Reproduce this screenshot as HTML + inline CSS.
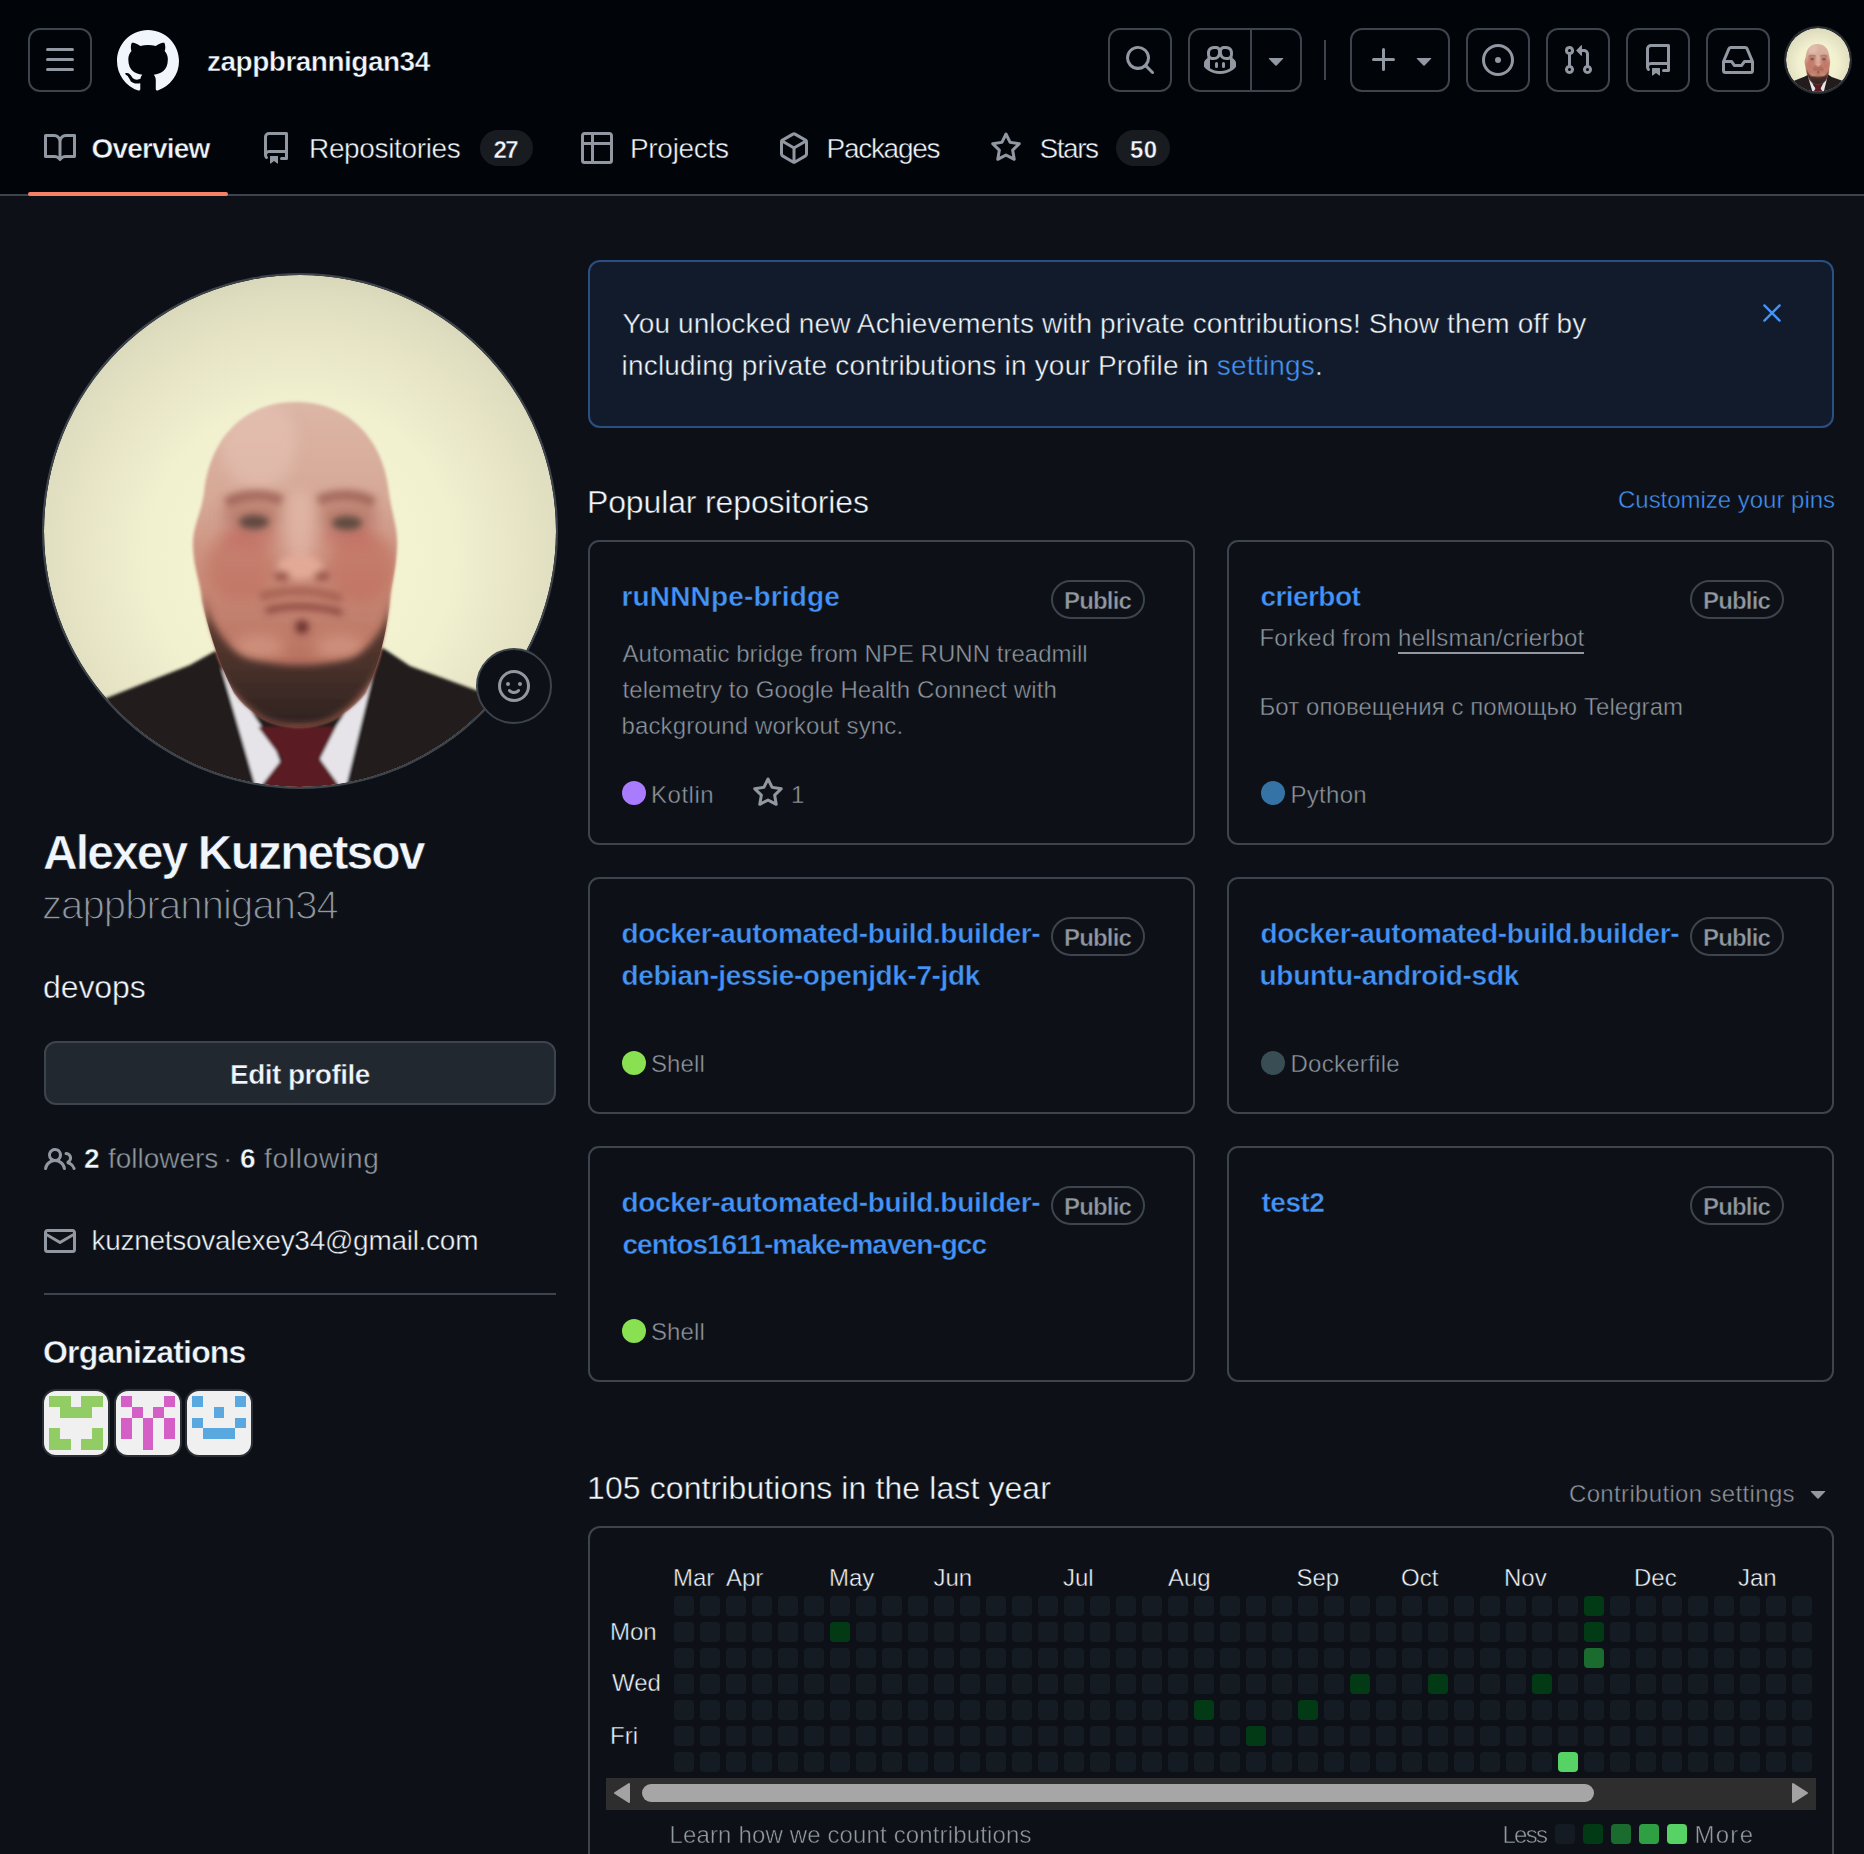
<!DOCTYPE html><html><head><meta charset="utf-8"><style>
html,body{margin:0;padding:0;background:#0d1117;width:1864px;height:1854px;overflow:hidden;}
body{position:relative;font-family:"Liberation Sans",sans-serif;}
.btn{position:absolute;box-sizing:border-box;border:2px solid #3d444d;border-radius:12px;}
</style></head><body>
<div style="position:absolute;left:0px;top:0px;width:1864px;height:194px;background:#010409"></div>
<div style="position:absolute;left:0px;top:194px;width:1864px;height:2px;background:#3d444d"></div>
<div class="btn" style="left:28px;top:28px;width:64px;height:64px"></div>
<svg style="position:absolute;left:44px;top:44px;" width="32" height="32" viewBox="0 0 16 16" fill="#9198a1"><path d="M1 2.75A.75.75 0 0 1 1.75 2h12.5a.75.75 0 0 1 0 1.5H1.75A.75.75 0 0 1 1 2.75Zm0 5A.75.75 0 0 1 1.75 7h12.5a.75.75 0 0 1 0 1.5H1.75A.75.75 0 0 1 1 7.75ZM1.75 12h12.5a.75.75 0 0 1 0 1.5H1.75a.75.75 0 0 1 0-1.5Z"/></svg>
<svg style="position:absolute;left:117px;top:30px;" width="62" height="62" viewBox="0 0 16 16" fill="#f0f6fc"><path d="M8 0c4.42 0 8 3.58 8 8a8.013 8.013 0 0 1-5.45 7.59c-.4.08-.55-.17-.55-.38 0-.27.01-1.13.01-2.2 0-.75-.25-1.23-.54-1.48 1.78-.2 3.65-.88 3.65-3.95 0-.88-.31-1.59-.82-2.15.08-.2.36-1.02-.08-2.12 0 0-.67-.22-2.2.82-.64-.18-1.32-.27-2-.27-.68 0-1.36.09-2 .27-1.53-1.03-2.2-.82-2.2-.82-.44 1.1-.16 1.92-.08 2.12-.51.56-.82 1.28-.82 2.15 0 3.06 1.86 3.75 3.64 3.95-.23.2-.44.55-.51 1.07-.46.21-1.61.55-2.33-.66-.15-.24-.6-.83-1.23-.82-.67.01-.27.38.01.53.34.19.73.9.82 1.13.16.45.68 1.31 2.69.94 0 .67.01 1.3.01 1.49 0 .21-.15.45-.55.38A7.995 7.995 0 0 1 0 8c0-4.42 3.58-8 8-8Z"/></svg>
<div id="t1c101240" style="position:absolute;left:207.00px;top:47.80px;font-size:28px;line-height:28px;color:#f0f6fc;font-weight:700;letter-spacing:-0.500px;white-space:nowrap;-webkit-text-stroke:0.45px #010409;">zappbrannigan34</div>
<div class="btn" style="left:1108px;top:28px;width:64px;height:64px"></div>
<svg style="position:absolute;left:1124px;top:44px;" width="32" height="32" viewBox="0 0 16 16" fill="#9198a1"><path d="M10.68 11.74a6 6 0 0 1-7.922-8.982 6 6 0 0 1 8.982 7.922l3.04 3.04a.749.749 0 0 1-.326 1.275.749.749 0 0 1-.734-.215ZM11.5 7a4.499 4.499 0 1 0-8.997 0A4.499 4.499 0 0 0 11.5 7Z"/></svg>
<div class="btn" style="left:1188px;top:28px;width:114px;height:64px"></div>
<div style="position:absolute;left:1250px;top:28px;width:2px;height:64px;background:#3d444d"></div>
<svg style="position:absolute;left:1204px;top:44px;" width="32" height="32" viewBox="0 0 16 16" fill="#9198a1"><path d="M7.998 15.035c-4.562 0-7.873-2.914-7.998-3.749V9.338c.085-.628.677-1.686 1.588-2.065.013-.07.024-.143.036-.218.029-.183.06-.384.126-.612-.201-.508-.254-1.084-.254-1.656 0-.87.128-1.769.693-2.484.579-.733 1.494-1.124 2.724-1.261 1.206-.134 2.262.034 2.944.765.05.053.096.108.139.165.044-.057.094-.112.143-.165.682-.731 1.738-.899 2.944-.765 1.23.137 2.145.528 2.724 1.261.566.715.693 1.614.693 2.484 0 .572-.053 1.148-.254 1.656.066.228.098.429.126.612.012.076.024.148.037.218.924.385 1.522 1.471 1.591 2.095v1.872c0 .766-3.351 3.795-8.002 3.795Zm0-1.485c2.28 0 4.584-1.11 5.002-1.433V7.862l-.023-.116c-.49.21-1.075.291-1.727.291-1.146 0-2.059-.327-2.71-.991A3.222 3.222 0 0 1 8 6.303a3.24 3.24 0 0 1-.544.743c-.65.664-1.563.991-2.71.991-.652 0-1.236-.081-1.727-.291l-.023.116v4.255c.419.323 2.722 1.433 5.002 1.433ZM6.762 2.83c-.193-.206-.637-.413-1.682-.297-1.019.113-1.479.404-1.713.7-.247.312-.369.789-.369 1.554 0 .793.129 1.171.308 1.371.162.181.519.379 1.442.379.853 0 1.339-.235 1.638-.54.315-.322.527-.827.617-1.553.117-.935-.037-1.395-.241-1.614Zm4.155-.297c-1.044-.116-1.488.091-1.681.297-.204.219-.359.679-.242 1.614.091.726.303 1.231.618 1.553.299.305.784.54 1.638.54.922 0 1.28-.198 1.442-.379.179-.2.308-.578.308-1.371 0-.765-.123-1.242-.37-1.554-.233-.296-.693-.587-1.713-.7Z"/><path d="M6.25 9.037a.75.75 0 0 1 .75.75v1.501a.75.75 0 0 1-1.5 0V9.787a.75.75 0 0 1 .75-.75Zm4.25.75v1.501a.75.75 0 0 1-1.5 0V9.787a.75.75 0 0 1 1.5 0Z"/></svg>
<svg style="position:absolute;left:1260px;top:44px;" width="32" height="32" viewBox="0 0 16 16" fill="#9198a1"><path d="m4.427 7.427 3.396 3.396a.25.25 0 0 0 .354 0l3.396-3.396A.25.25 0 0 0 11.396 7H4.604a.25.25 0 0 0-.177.427Z"/></svg>
<div style="position:absolute;left:1324px;top:40px;width:2px;height:40px;background:#3d444d"></div>
<div class="btn" style="left:1350px;top:28px;width:100px;height:64px"></div>
<svg style="position:absolute;left:1368px;top:44px;" width="32" height="32" viewBox="0 0 16 16" fill="#9198a1"><path d="M7.75 2a.75.75 0 0 1 .75.75V7h4.25a.75.75 0 0 1 0 1.5H8.5v4.25a.75.75 0 0 1-1.5 0V8.5H2.75a.75.75 0 0 1 0-1.5H7V2.75A.75.75 0 0 1 7.75 2Z"/></svg>
<svg style="position:absolute;left:1408px;top:44px;" width="32" height="32" viewBox="0 0 16 16" fill="#9198a1"><path d="m4.427 7.427 3.396 3.396a.25.25 0 0 0 .354 0l3.396-3.396A.25.25 0 0 0 11.396 7H4.604a.25.25 0 0 0-.177.427Z"/></svg>
<div class="btn" style="left:1466px;top:28px;width:64px;height:64px"></div>
<svg style="position:absolute;left:1482px;top:44px;" width="32" height="32" viewBox="0 0 16 16" fill="#9198a1"><path d="M8 9.5a1.5 1.5 0 1 0 0-3 1.5 1.5 0 0 0 0 3Z"/><path d="M8 0a8 8 0 1 1 0 16A8 8 0 0 1 8 0ZM1.5 8a6.5 6.5 0 1 0 13 0 6.5 6.5 0 0 0-13 0Z"/></svg>
<div class="btn" style="left:1546px;top:28px;width:64px;height:64px"></div>
<svg style="position:absolute;left:1562px;top:44px;" width="32" height="32" viewBox="0 0 16 16" fill="#9198a1"><path d="M1.5 3.25a2.25 2.25 0 1 1 3 2.122v5.256a2.251 2.251 0 1 1-1.5 0V5.372A2.25 2.25 0 0 1 1.5 3.25Zm5.677-.177L9.573.677A.25.25 0 0 1 10 .854V2.5h1A2.5 2.5 0 0 1 13.5 5v5.628a2.251 2.251 0 1 1-1.5 0V5a1 1 0 0 0-1-1h-1v1.646a.25.25 0 0 1-.427.177L7.177 3.427a.25.25 0 0 1 0-.354ZM3.75 2.5a.75.75 0 1 0 0 1.5.75.75 0 0 0 0-1.5Zm0 9.5a.75.75 0 1 0 0 1.5.75.75 0 0 0 0-1.5Zm8.25.75a.75.75 0 1 0 1.5 0 .75.75 0 0 0-1.5 0Z"/></svg>
<div class="btn" style="left:1626px;top:28px;width:64px;height:64px"></div>
<svg style="position:absolute;left:1642px;top:44px;" width="32" height="32" viewBox="0 0 16 16" fill="#9198a1"><path d="M2 2.5A2.5 2.5 0 0 1 4.5 0h8.75a.75.75 0 0 1 .75.75v12.5a.75.75 0 0 1-.75.75h-2.5a.75.75 0 0 1 0-1.5h1.75v-2h-8a1 1 0 0 0-.714 1.7.75.75 0 1 1-1.072 1.05A2.495 2.495 0 0 1 2 11.5Zm10.5-1h-8a1 1 0 0 0-1 1v6.708A2.486 2.486 0 0 1 4.5 9h8ZM5 12.25a.25.25 0 0 1 .25-.25h3.5a.25.25 0 0 1 .25.25v3.25a.25.25 0 0 1-.4.2l-1.45-1.087a.249.249 0 0 0-.3 0L5.4 15.7a.25.25 0 0 1-.4-.2Z"/></svg>
<div class="btn" style="left:1706px;top:28px;width:64px;height:64px"></div>
<svg style="position:absolute;left:1722px;top:44px;" width="32" height="32" viewBox="0 0 16 16" fill="#9198a1"><path d="M2.8 2.06A1.75 1.75 0 0 1 4.41 1h7.18c.7 0 1.333.417 1.61 1.06l2.74 6.395c.04.093.06.194.06.295v4.5A1.75 1.75 0 0 1 14.25 15H1.75A1.75 1.75 0 0 1 0 13.25v-4.5c0-.101.02-.202.06-.295Zm1.61.44a.25.25 0 0 0-.23.152L1.887 8H4.75a.75.75 0 0 1 .6.3L6.625 10h2.75l1.275-1.7a.75.75 0 0 1 .6-.3h2.863L11.82 2.652a.25.25 0 0 0-.23-.152Zm10.09 7h-2.875l-1.275 1.7a.75.75 0 0 1-.6.3h-3.5a.75.75 0 0 1-.6-.3L4.375 9.5H1.5v3.75c0 .138.112.25.25.25h12.5a.25.25 0 0 0 .25-.25Z"/></svg>
<div style="position:absolute;left:1786px;top:28px;width:64px;height:64px;border-radius:50%;overflow:hidden;box-shadow:0 0 0 2px #2a2f36"><svg width="100%" height="100%" viewBox="0 0 512 512" style="display:block">
<defs>
<radialGradient id="habg" cx="0.5" cy="0.55" r="0.6">
<stop offset="0" stop-color="#f7f7d6"/><stop offset="0.5" stop-color="#f1f0cf"/><stop offset="0.85" stop-color="#e0dec0"/><stop offset="1" stop-color="#d2d0b2"/></radialGradient>
<linearGradient id="haskin" x1="0" y1="0" x2="0" y2="1">
<stop offset="0" stop-color="#dcb6a6"/><stop offset="0.3" stop-color="#d6a896"/><stop offset="0.55" stop-color="#c98a78"/><stop offset="0.8" stop-color="#b87260"/><stop offset="1" stop-color="#9c5a48"/></linearGradient>
<linearGradient id="habeard" x1="0" y1="0" x2="0" y2="1">
<stop offset="0" stop-color="#8a5a48" stop-opacity="0.2"/><stop offset="0.25" stop-color="#5a3a30"/><stop offset="1" stop-color="#2e2220"/></linearGradient>
<filter id="hab1" x="-10%" y="-10%" width="120%" height="120%"><feGaussianBlur stdDeviation="1.6"/></filter>
<filter id="hab2" x="-50%" y="-50%" width="200%" height="200%"><feGaussianBlur stdDeviation="7"/></filter>
<filter id="hab3" x="-50%" y="-50%" width="200%" height="200%"><feGaussianBlur stdDeviation="3.5"/></filter>
<clipPath id="haclip"><circle cx="256" cy="256" r="256"/></clipPath>
<clipPath id="hahc"><path d="M252 127 C305 127 340 165 345 218 C348 240 354 252 353 272 C352 295 348 305 346 326 C343 352 338 382 322 418 C305 440 280 452 255 452 C230 452 205 440 190 418 C172 382 164 352 158 326 C156 305 150 295 149 272 C148 252 157 240 160 218 C165 165 200 127 252 127 Z"/></clipPath>
</defs>
<g clip-path="url(#haclip)">
<rect width="512" height="512" fill="url(#habg)"/>
<g filter="url(#hab1)">
<path d="M-20 450 L60 424 L146 390 L173 375 L256 400 L339 373 L366 391 L445 420 L540 452 L540 540 L-20 540Z" fill="#211d1e"/>
<path d="M177 392 L230 470 L248 520 L214 520 Z" fill="#e6e4e8"/>
<path d="M331 392 L280 470 L266 520 L300 520 Z" fill="#e6e4e8"/>
<path d="M214 452 L292 452 L276 484 L302 520 L210 520 L238 484 Z" fill="#5a1c22"/>
<path d="M252 127 C305 127 340 165 345 218 C348 240 354 252 353 272 C352 295 348 305 346 326 C343 352 338 382 322 418 C305 440 280 452 255 452 C230 452 205 440 190 418 C172 382 164 352 158 326 C156 305 150 295 149 272 C148 252 157 240 160 218 C165 165 200 127 252 127 Z" fill="url(#haskin)"/>
</g>
<g clip-path="url(#hahc)">
<g filter="url(#hab2)">
<ellipse cx="215" cy="170" rx="38" ry="45" fill="#e8c8ba" opacity="0.45"/>
<ellipse cx="196" cy="292" rx="34" ry="34" fill="#bf6c5c" opacity="0.55"/>
<ellipse cx="318" cy="292" rx="34" ry="36" fill="#bf6c5c" opacity="0.6"/>
<ellipse cx="205" cy="262" rx="30" ry="10" fill="#c06a60" opacity="0.6"/><ellipse cx="208" cy="240" rx="30" ry="16" fill="#a86458" opacity="0.55"/><ellipse cx="304" cy="241" rx="30" ry="16" fill="#a86458" opacity="0.55"/>
<ellipse cx="305" cy="262" rx="30" ry="10" fill="#c06a60" opacity="0.6"/>
<ellipse cx="256" cy="255" rx="14" ry="40" fill="#e8c0b0" opacity="0.6"/>
<ellipse cx="215" cy="372" rx="26" ry="12" fill="#d69a86" opacity="0.7"/>
<ellipse cx="296" cy="372" rx="26" ry="12" fill="#d69a86" opacity="0.7"/>
</g>
<g filter="url(#hab3)">
<path d="M182 228 C200 218 222 218 238 226" stroke="#94564a" stroke-width="11" fill="none" opacity="0.7"/>
<path d="M274 226 C292 218 314 218 330 228" stroke="#94564a" stroke-width="11" fill="none" opacity="0.7"/>
<ellipse cx="210" cy="247" rx="15" ry="7" fill="#5e4640"/>
<ellipse cx="303" cy="248" rx="15" ry="7" fill="#5e4a40"/>
<ellipse cx="256" cy="292" rx="22" ry="12" fill="#e2aa96"/>
<ellipse cx="238" cy="301" rx="8" ry="5" fill="#9a5448"/>
<ellipse cx="278" cy="301" rx="8" ry="5" fill="#9a5448"/>
<path d="M216 322 C240 314 272 314 298 324" stroke="#a05a4a" stroke-width="9" fill="none" opacity="0.8"/>
<path d="M222 336 C245 330 272 330 298 338" stroke="#7e3a34" stroke-width="5" fill="none"/>
<ellipse cx="258" cy="352" rx="7" ry="7" fill="#6e3430"/>
<path d="M160 318 C161.5 315.0 166.0 341.7 172 352 C178.0 362.3 186.7 374.0 196 380 C205.3 386.0 218.0 386.3 228 388 C238.0 389.7 246.7 390.0 256 390 C265.3 390.0 274.3 389.7 284 388 C293.7 386.3 305.0 386.0 314 380 C323.0 374.0 332.3 362.3 338 352 C343.7 341.7 346.8 315.0 348 318 C349.2 321.0 348.0 356.0 345 370 C342.0 384.0 336.3 392.0 330 402 C323.7 412.0 315.0 422.7 307 430 C299.0 437.3 290.8 442.7 282 446 C273.2 449.3 263.3 450.0 254 450 C244.7 450.0 234.7 449.3 226 446 C217.3 442.7 210.0 437.3 202 430 C194.0 422.7 184.5 412.0 178 402 C171.5 392.0 166.0 384.0 163 370 C160.0 356.0 158.5 321.0 160 318Z" fill="url(#habeard)"/>
</g>
</g>
</g>
</svg></div>
<svg style="position:absolute;left:44px;top:132px;" width="32" height="32" viewBox="0 0 16 16" fill="#9198a1"><path d="M0 1.75A.75.75 0 0 1 .75 1h4.253c1.227 0 2.317.59 3 1.501A3.743 3.743 0 0 1 11.006 1h4.245a.75.75 0 0 1 .75.75v10.5a.75.75 0 0 1-.75.75h-4.507a2.25 2.25 0 0 0-1.591.659l-.622.621a.75.75 0 0 1-1.06 0l-.622-.621A2.25 2.25 0 0 0 5.258 13H.75a.75.75 0 0 1-.75-.75Zm7.251 10.324.004-5.073-.002-2.253A2.25 2.25 0 0 0 5.003 2.5H1.5v9h3.757a3.75 3.75 0 0 1 1.994.574ZM8.755 4.75l-.004 7.322a3.752 3.752 0 0 1 1.992-.572H14.5v-9h-3.495a2.25 2.25 0 0 0-2.25 2.25Z"/></svg>
<div id="t9cfff925" style="position:absolute;left:91.50px;top:135.30px;font-size:28px;line-height:28px;color:#f0f6fc;font-weight:700;letter-spacing:-0.829px;white-space:nowrap;-webkit-text-stroke:0.45px #010409;">Overview</div>
<div style="position:absolute;left:28px;top:192px;width:200px;height:4px;background:#f78166;border-radius:2px"></div>
<svg style="position:absolute;left:260px;top:132px;" width="32" height="32" viewBox="0 0 16 16" fill="#9198a1"><path d="M2 2.5A2.5 2.5 0 0 1 4.5 0h8.75a.75.75 0 0 1 .75.75v12.5a.75.75 0 0 1-.75.75h-2.5a.75.75 0 0 1 0-1.5h1.75v-2h-8a1 1 0 0 0-.714 1.7.75.75 0 1 1-1.072 1.05A2.495 2.495 0 0 1 2 11.5Zm10.5-1h-8a1 1 0 0 0-1 1v6.708A2.486 2.486 0 0 1 4.5 9h8ZM5 12.25a.25.25 0 0 1 .25-.25h3.5a.25.25 0 0 1 .25.25v3.25a.25.25 0 0 1-.4.2l-1.45-1.087a.249.249 0 0 0-.3 0L5.4 15.7a.25.25 0 0 1-.4-.2Z"/></svg>
<div id="t4dd1f61e" style="position:absolute;left:309.00px;top:135.30px;font-size:28px;line-height:28px;color:#f0f6fc;font-weight:400;letter-spacing:-0.345px;white-space:nowrap;-webkit-text-stroke:0.45px #010409;">Repositories</div>
<div style="position:absolute;left:480px;top:130px;width:53px;height:36px;background:#181b20;border-radius:18px"></div>
<div id="t87ed042e" style="position:absolute;left:493.50px;top:138.18px;font-size:24px;line-height:24px;color:#f0f6fc;font-weight:700;letter-spacing:-1.600px;white-space:nowrap;-webkit-text-stroke:0.45px #181b20;">27</div>
<svg style="position:absolute;left:581px;top:132px;" width="32" height="32" viewBox="0 0 16 16" fill="#9198a1"><path d="M0 1.75C0 .784.784 0 1.75 0h12.5C15.216 0 16 .784 16 1.75v12.5A1.75 1.75 0 0 1 14.25 16H1.75A1.75 1.75 0 0 1 0 14.25ZM6.5 6.5v8h7.75a.25.25 0 0 0 .25-.25V6.5Zm8-1.5V1.75a.25.25 0 0 0-.25-.25H6.5V5Zm-13 1.5v7.75c0 .138.112.25.25.25H5v-8ZM5 5V1.5H1.75a.25.25 0 0 0-.25.25V5Z"/></svg>
<div id="td437a748" style="position:absolute;left:630.00px;top:135.30px;font-size:28px;line-height:28px;color:#f0f6fc;font-weight:400;letter-spacing:-0.314px;white-space:nowrap;-webkit-text-stroke:0.45px #010409;">Projects</div>
<svg style="position:absolute;left:778px;top:132px;" width="32" height="32" viewBox="0 0 16 16" fill="#9198a1"><path d="m8.878.392 5.25 3.045c.54.314.872.89.872 1.514v6.098a1.75 1.75 0 0 1-.872 1.514l-5.25 3.045a1.75 1.75 0 0 1-1.756 0l-5.25-3.045A1.75 1.75 0 0 1 1 11.049V4.951c0-.624.332-1.2.872-1.514L7.122.392a1.75 1.75 0 0 1 1.756 0ZM7.875 1.69l-4.63 2.685L8 7.133l4.755-2.758-4.63-2.685a.248.248 0 0 0-.25 0ZM2.5 5.677v5.372c0 .09.047.171.125.216l4.625 2.683V8.432Zm6.25 8.271 4.625-2.683a.25.25 0 0 0 .125-.216V5.677L8.75 8.432Z"/></svg>
<div id="t48c3dd9c" style="position:absolute;left:826.50px;top:135.30px;font-size:28px;line-height:28px;color:#f0f6fc;font-weight:400;letter-spacing:-1.286px;white-space:nowrap;-webkit-text-stroke:0.45px #010409;">Packages</div>
<svg style="position:absolute;left:990px;top:132px;" width="32" height="32" viewBox="0 0 16 16" fill="#9198a1"><path d="M8 .25a.75.75 0 0 1 .673.418l1.882 3.815 4.21.612a.75.75 0 0 1 .416 1.279l-3.046 2.97.719 4.192a.751.751 0 0 1-1.088.791L8 12.347l-3.766 1.98a.75.75 0 0 1-1.088-.79l.72-4.194L.818 6.374a.75.75 0 0 1 .416-1.28l4.21-.611L7.327.668A.75.75 0 0 1 8 .25Zm0 2.445L6.615 5.5a.75.75 0 0 1-.564.41l-3.097.45 2.24 2.184a.75.75 0 0 1 .216.664l-.528 3.084 2.769-1.456a.75.75 0 0 1 .698 0l2.77 1.456-.53-3.084a.75.75 0 0 1 .216-.664l2.24-2.183-3.096-.45a.75.75 0 0 1-.564-.41L8 2.694Z"/></svg>
<div id="t297d9532" style="position:absolute;left:1039.50px;top:135.30px;font-size:28px;line-height:28px;color:#f0f6fc;font-weight:400;letter-spacing:-1.450px;white-space:nowrap;-webkit-text-stroke:0.45px #010409;">Stars</div>
<div style="position:absolute;left:1116px;top:130px;width:54px;height:36px;background:#181b20;border-radius:18px"></div>
<div id="td88de1e3" style="position:absolute;left:1130.00px;top:138.18px;font-size:24px;line-height:24px;color:#f0f6fc;font-weight:700;letter-spacing:0.400px;white-space:nowrap;-webkit-text-stroke:0.45px #181b20;">50</div>
<div style="position:absolute;left:44px;top:275px;width:512px;height:512px;border-radius:50%;overflow:hidden;box-shadow:0 0 0 2px #3d444d"><svg width="100%" height="100%" viewBox="0 0 512 512" style="display:block">
<defs>
<radialGradient id="babg" cx="0.5" cy="0.55" r="0.6">
<stop offset="0" stop-color="#f7f7d6"/><stop offset="0.5" stop-color="#f1f0cf"/><stop offset="0.85" stop-color="#e0dec0"/><stop offset="1" stop-color="#d2d0b2"/></radialGradient>
<linearGradient id="baskin" x1="0" y1="0" x2="0" y2="1">
<stop offset="0" stop-color="#dcb6a6"/><stop offset="0.3" stop-color="#d6a896"/><stop offset="0.55" stop-color="#c98a78"/><stop offset="0.8" stop-color="#b87260"/><stop offset="1" stop-color="#9c5a48"/></linearGradient>
<linearGradient id="babeard" x1="0" y1="0" x2="0" y2="1">
<stop offset="0" stop-color="#8a5a48" stop-opacity="0.2"/><stop offset="0.25" stop-color="#5a3a30"/><stop offset="1" stop-color="#2e2220"/></linearGradient>
<filter id="bab1" x="-10%" y="-10%" width="120%" height="120%"><feGaussianBlur stdDeviation="1.6"/></filter>
<filter id="bab2" x="-50%" y="-50%" width="200%" height="200%"><feGaussianBlur stdDeviation="7"/></filter>
<filter id="bab3" x="-50%" y="-50%" width="200%" height="200%"><feGaussianBlur stdDeviation="3.5"/></filter>
<clipPath id="baclip"><circle cx="256" cy="256" r="256"/></clipPath>
<clipPath id="bahc"><path d="M252 127 C305 127 340 165 345 218 C348 240 354 252 353 272 C352 295 348 305 346 326 C343 352 338 382 322 418 C305 440 280 452 255 452 C230 452 205 440 190 418 C172 382 164 352 158 326 C156 305 150 295 149 272 C148 252 157 240 160 218 C165 165 200 127 252 127 Z"/></clipPath>
</defs>
<g clip-path="url(#baclip)">
<rect width="512" height="512" fill="url(#babg)"/>
<g filter="url(#bab1)">
<path d="M-20 450 L60 424 L146 390 L173 375 L256 400 L339 373 L366 391 L445 420 L540 452 L540 540 L-20 540Z" fill="#211d1e"/>
<path d="M177 392 L230 470 L248 520 L214 520 Z" fill="#e6e4e8"/>
<path d="M331 392 L280 470 L266 520 L300 520 Z" fill="#e6e4e8"/>
<path d="M214 452 L292 452 L276 484 L302 520 L210 520 L238 484 Z" fill="#5a1c22"/>
<path d="M252 127 C305 127 340 165 345 218 C348 240 354 252 353 272 C352 295 348 305 346 326 C343 352 338 382 322 418 C305 440 280 452 255 452 C230 452 205 440 190 418 C172 382 164 352 158 326 C156 305 150 295 149 272 C148 252 157 240 160 218 C165 165 200 127 252 127 Z" fill="url(#baskin)"/>
</g>
<g clip-path="url(#bahc)">
<g filter="url(#bab2)">
<ellipse cx="215" cy="170" rx="38" ry="45" fill="#e8c8ba" opacity="0.45"/>
<ellipse cx="196" cy="292" rx="34" ry="34" fill="#bf6c5c" opacity="0.55"/>
<ellipse cx="318" cy="292" rx="34" ry="36" fill="#bf6c5c" opacity="0.6"/>
<ellipse cx="205" cy="262" rx="30" ry="10" fill="#c06a60" opacity="0.6"/><ellipse cx="208" cy="240" rx="30" ry="16" fill="#a86458" opacity="0.55"/><ellipse cx="304" cy="241" rx="30" ry="16" fill="#a86458" opacity="0.55"/>
<ellipse cx="305" cy="262" rx="30" ry="10" fill="#c06a60" opacity="0.6"/>
<ellipse cx="256" cy="255" rx="14" ry="40" fill="#e8c0b0" opacity="0.6"/>
<ellipse cx="215" cy="372" rx="26" ry="12" fill="#d69a86" opacity="0.7"/>
<ellipse cx="296" cy="372" rx="26" ry="12" fill="#d69a86" opacity="0.7"/>
</g>
<g filter="url(#bab3)">
<path d="M182 228 C200 218 222 218 238 226" stroke="#94564a" stroke-width="11" fill="none" opacity="0.7"/>
<path d="M274 226 C292 218 314 218 330 228" stroke="#94564a" stroke-width="11" fill="none" opacity="0.7"/>
<ellipse cx="210" cy="247" rx="15" ry="7" fill="#5e4640"/>
<ellipse cx="303" cy="248" rx="15" ry="7" fill="#5e4a40"/>
<ellipse cx="256" cy="292" rx="22" ry="12" fill="#e2aa96"/>
<ellipse cx="238" cy="301" rx="8" ry="5" fill="#9a5448"/>
<ellipse cx="278" cy="301" rx="8" ry="5" fill="#9a5448"/>
<path d="M216 322 C240 314 272 314 298 324" stroke="#a05a4a" stroke-width="9" fill="none" opacity="0.8"/>
<path d="M222 336 C245 330 272 330 298 338" stroke="#7e3a34" stroke-width="5" fill="none"/>
<ellipse cx="258" cy="352" rx="7" ry="7" fill="#6e3430"/>
<path d="M160 318 C161.5 315.0 166.0 341.7 172 352 C178.0 362.3 186.7 374.0 196 380 C205.3 386.0 218.0 386.3 228 388 C238.0 389.7 246.7 390.0 256 390 C265.3 390.0 274.3 389.7 284 388 C293.7 386.3 305.0 386.0 314 380 C323.0 374.0 332.3 362.3 338 352 C343.7 341.7 346.8 315.0 348 318 C349.2 321.0 348.0 356.0 345 370 C342.0 384.0 336.3 392.0 330 402 C323.7 412.0 315.0 422.7 307 430 C299.0 437.3 290.8 442.7 282 446 C273.2 449.3 263.3 450.0 254 450 C244.7 450.0 234.7 449.3 226 446 C217.3 442.7 210.0 437.3 202 430 C194.0 422.7 184.5 412.0 178 402 C171.5 392.0 166.0 384.0 163 370 C160.0 356.0 158.5 321.0 160 318Z" fill="url(#babeard)"/>
</g>
</g>
</g>
</svg></div>
<div style="position:absolute;left:476px;top:648px;width:76px;height:76px;box-sizing:border-box;border-radius:50%;background:#0d1117;border:2px solid #3d444d"></div>
<svg style="position:absolute;left:498px;top:670px;" width="32" height="32" viewBox="0 0 16 16" fill="#9198a1"><path d="M8 0a8 8 0 1 1 0 16A8 8 0 0 1 8 0ZM1.5 8a6.5 6.5 0 1 0 13 0 6.5 6.5 0 0 0-13 0Zm3.82 1.636a.75.75 0 0 1 1.038.175l.007.009c.103.118.22.222.35.31.264.178.683.37 1.285.37.602 0 1.02-.192 1.285-.371.13-.088.247-.192.35-.31l.007-.008a.75.75 0 0 1 1.222.87l-.022-.015c.02.013.021.015.021.015v.001l-.001.002-.002.003-.005.007-.014.019a2.066 2.066 0 0 1-.184.213c-.16.166-.338.316-.53.445-.63.418-1.37.638-2.127.629-.946 0-1.652-.308-2.126-.63a3.331 3.331 0 0 1-.715-.657l-.014-.02-.005-.006-.002-.003v-.002h-.001l.613-.432-.614.43a.75.75 0 0 1 .183-1.044ZM12 7a1 1 0 1 1-2 0 1 1 0 0 1 2 0ZM5 8a1 1 0 1 1 0-2 1 1 0 0 1 0 2Z"/></svg>
<div id="t20bce081" style="position:absolute;left:43.00px;top:829.07px;font-size:48px;line-height:48px;color:#f0f6fc;font-weight:700;letter-spacing:-1.893px;white-space:nowrap;-webkit-text-stroke:0.6px #0d1117;">Alexey Kuznetsov</div>
<div id="teaed1309" style="position:absolute;left:42.00px;top:885.34px;font-size:40px;line-height:40px;color:#9198a1;font-weight:400;letter-spacing:-0.886px;white-space:nowrap;-webkit-text-stroke:1.3px #0d1117;">zappbrannigan34</div>
<div id="tf60917c0" style="position:absolute;left:43.00px;top:970.91px;font-size:32px;line-height:32px;color:#f0f6fc;font-weight:400;letter-spacing:-0.080px;white-space:nowrap;-webkit-text-stroke:0.45px #0d1117;">devops</div>
<div class="btn" style="left:44px;top:1041px;width:512px;height:64px;background:#212830;border-color:#3d444d"></div>
<div id="t15f13a0d" style="position:absolute;left:230.00px;top:1060.50px;font-size:28px;line-height:28px;color:#f0f6fc;font-weight:700;letter-spacing:-0.545px;white-space:nowrap;-webkit-text-stroke:0.45px #212830;">Edit profile</div>
<svg style="position:absolute;left:44px;top:1144px;" width="32" height="32" viewBox="0 0 16 16" fill="#9198a1"><path d="M2 5.5a3.5 3.5 0 1 1 5.898 2.549 5.508 5.508 0 0 1 3.034 4.084.75.75 0 1 1-1.482.235 4 4 0 0 0-7.9 0 .75.75 0 0 1-1.482-.236A5.507 5.507 0 0 1 3.102 8.05 3.493 3.493 0 0 1 2 5.5ZM11 4a3.001 3.001 0 0 1 2.22 5.018 5.01 5.01 0 0 1 2.56 3.012.749.749 0 0 1-.885.954.752.752 0 0 1-.549-.514 3.507 3.507 0 0 0-2.522-2.372.75.75 0 0 1-.574-.73v-.352a.75.75 0 0 1 .416-.672A1.5 1.5 0 0 0 11 5.5.75.75 0 0 1 11 4Zm-5.5-.5a2 2 0 1 0-.001 3.999A2 2 0 0 0 5.5 3.5Z"/></svg>
<div id="tc30997b4" style="position:absolute;left:84.00px;top:1145.00px;font-size:28px;line-height:28px;color:#f0f6fc;font-weight:700;letter-spacing:0.000px;white-space:nowrap;-webkit-text-stroke:0.45px #0d1117;">2</div>
<div id="tb9f690eb" style="position:absolute;left:108.00px;top:1145.00px;font-size:28px;line-height:28px;color:#9198a1;font-weight:400;letter-spacing:-0.025px;white-space:nowrap;-webkit-text-stroke:0.45px #0d1117;">followers</div>
<div id="ta54ae7a0" style="position:absolute;left:223.00px;top:1145.00px;font-size:28px;line-height:28px;color:#9198a1;font-weight:400;letter-spacing:0.000px;white-space:nowrap;-webkit-text-stroke:0.45px #0d1117;">·</div>
<div id="t5c9e06c9" style="position:absolute;left:240.00px;top:1145.00px;font-size:28px;line-height:28px;color:#f0f6fc;font-weight:700;letter-spacing:0.000px;white-space:nowrap;-webkit-text-stroke:0.45px #0d1117;">6</div>
<div id="tdc530b09" style="position:absolute;left:264.00px;top:1145.00px;font-size:28px;line-height:28px;color:#9198a1;font-weight:400;letter-spacing:0.725px;white-space:nowrap;-webkit-text-stroke:0.45px #0d1117;">following</div>
<svg style="position:absolute;left:44px;top:1225px;" width="32" height="32" viewBox="0 0 16 16" fill="#9198a1"><path d="M1.75 2h12.5c.966 0 1.75.784 1.75 1.75v8.5A1.75 1.75 0 0 1 14.25 14H1.75A1.75 1.75 0 0 1 0 12.25v-8.5C0 2.784.784 2 1.75 2ZM1.5 12.251c0 .138.112.25.25.25h12.5a.25.25 0 0 0 .25-.25V5.809L8.38 9.397a.75.75 0 0 1-.76 0L1.5 5.809v6.442Zm13-8.181v-.32a.25.25 0 0 0-.25-.25H1.75a.25.25 0 0 0-.25.25v.32L8 7.88Z"/></svg>
<div id="t6ac1d556" style="position:absolute;left:91.50px;top:1226.80px;font-size:28px;line-height:28px;color:#f0f6fc;font-weight:400;letter-spacing:-0.277px;white-space:nowrap;-webkit-text-stroke:0.45px #0d1117;">kuznetsovalexey34@gmail.com</div>
<div style="position:absolute;left:44px;top:1293px;width:512px;height:2px;background:#3d444d"></div>
<div id="tc8725f26" style="position:absolute;left:43.00px;top:1335.91px;font-size:32px;line-height:32px;color:#f0f6fc;font-weight:700;letter-spacing:-0.833px;white-space:nowrap;-webkit-text-stroke:0.45px #0d1117;">Organizations</div>
<div style="position:absolute;left:44px;top:1391px;width:64px;height:64px;border-radius:12px;overflow:hidden;box-shadow:0 0 0 2px #2a2f36;background:#f0f0f0"><svg width="64" height="64" viewBox="0 0 420 420" shape-rendering="crispEdges"><rect x="35" y="35" width="70" height="70" fill="#92cc65"/><rect x="105" y="35" width="70" height="70" fill="#92cc65"/><rect x="245" y="35" width="70" height="70" fill="#92cc65"/><rect x="315" y="35" width="70" height="70" fill="#92cc65"/><rect x="105" y="105" width="70" height="70" fill="#92cc65"/><rect x="175" y="105" width="70" height="70" fill="#92cc65"/><rect x="245" y="105" width="70" height="70" fill="#92cc65"/><rect x="35" y="245" width="70" height="70" fill="#92cc65"/><rect x="315" y="245" width="70" height="70" fill="#92cc65"/><rect x="35" y="315" width="70" height="70" fill="#92cc65"/><rect x="105" y="315" width="70" height="70" fill="#92cc65"/><rect x="245" y="315" width="70" height="70" fill="#92cc65"/><rect x="315" y="315" width="70" height="70" fill="#92cc65"/></svg></div>
<div style="position:absolute;left:116px;top:1391px;width:64px;height:64px;border-radius:12px;overflow:hidden;box-shadow:0 0 0 2px #2a2f36;background:#f0f0f0"><svg width="64" height="64" viewBox="0 0 420 420" shape-rendering="crispEdges"><rect x="35" y="35" width="70" height="70" fill="#d45fc6"/><rect x="315" y="35" width="70" height="70" fill="#d45fc6"/><rect x="105" y="105" width="70" height="70" fill="#d45fc6"/><rect x="245" y="105" width="70" height="70" fill="#d45fc6"/><rect x="35" y="175" width="70" height="70" fill="#d45fc6"/><rect x="175" y="175" width="70" height="70" fill="#d45fc6"/><rect x="315" y="175" width="70" height="70" fill="#d45fc6"/><rect x="35" y="245" width="70" height="70" fill="#d45fc6"/><rect x="175" y="245" width="70" height="70" fill="#d45fc6"/><rect x="315" y="245" width="70" height="70" fill="#d45fc6"/><rect x="175" y="315" width="70" height="70" fill="#d45fc6"/></svg></div>
<div style="position:absolute;left:187px;top:1391px;width:64px;height:64px;border-radius:12px;overflow:hidden;box-shadow:0 0 0 2px #2a2f36;background:#f0f0f0"><svg width="64" height="64" viewBox="0 0 420 420" shape-rendering="crispEdges"><rect x="35" y="35" width="70" height="70" fill="#5aa8e0"/><rect x="315" y="35" width="70" height="70" fill="#5aa8e0"/><rect x="175" y="105" width="70" height="70" fill="#5aa8e0"/><rect x="35" y="175" width="70" height="70" fill="#5aa8e0"/><rect x="315" y="175" width="70" height="70" fill="#5aa8e0"/><rect x="105" y="245" width="70" height="70" fill="#5aa8e0"/><rect x="175" y="245" width="70" height="70" fill="#5aa8e0"/><rect x="245" y="245" width="70" height="70" fill="#5aa8e0"/></svg></div>
<div style="position:absolute;left:588px;top:260px;width:1246px;height:168px;box-sizing:border-box;border-radius:12px;border:2px solid #2a5083;background:#121b2b"></div>
<div id="t7388213d" style="position:absolute;left:622.50px;top:310.30px;font-size:28px;line-height:28px;color:#f0f6fc;font-weight:400;letter-spacing:0.110px;white-space:nowrap;-webkit-text-stroke:0.45px #121b2b;">You unlocked new Achievements with private contributions! Show them off by</div>
<div id="t59afc274" style="position:absolute;left:621.50px;top:352.30px;font-size:28px;line-height:28px;color:#f0f6fc;font-weight:400;letter-spacing:0.198px;white-space:nowrap;-webkit-text-stroke:0.45px #121b2b;">including private contributions in your Profile in <span style="color:#4493f8">settings</span>.</div>
<svg style="position:absolute;left:1756px;top:297px" width="32" height="32"><path d="M8.4 8.4 L23.6 23.6 M23.6 8.4 L8.4 23.6" stroke="#4493f8" stroke-width="2.4" stroke-linecap="round"/></svg>
<div id="tbc7f7b42" style="position:absolute;left:587.00px;top:485.71px;font-size:32px;line-height:32px;color:#f0f6fc;font-weight:400;letter-spacing:-0.137px;white-space:nowrap;-webkit-text-stroke:0.45px #0d1117;">Popular repositories</div>
<div id="t4141eb40" style="position:absolute;left:1618.00px;top:488.38px;font-size:24px;line-height:24px;color:#4493f8;font-weight:400;letter-spacing:-0.022px;white-space:nowrap;-webkit-text-stroke:0.45px #0d1117;">Customize your pins</div>
<div class="btn" style="left:588px;top:540px;width:607px;height:305px;border-radius:11px"></div>
<div id="te43e190a" style="position:absolute;left:621.50px;top:582.50px;font-size:28px;line-height:28px;color:#4493f8;font-weight:700;letter-spacing:0.169px;white-space:nowrap;-webkit-text-stroke:0.45px #0d1117;">ruNNNpe-bridge</div>
<div style="position:absolute;left:1051px;top:580px;width:94px;height:39px;box-sizing:border-box;border:2px solid #3d444d;border-radius:20px"></div>
<div id="t1b2b05ba" style="position:absolute;left:1064.00px;top:588.68px;font-size:24px;line-height:24px;color:#9198a1;font-weight:700;letter-spacing:-0.840px;white-space:nowrap;-webkit-text-stroke:0.45px #0d1117;">Public</div>
<div id="t9e822396" style="position:absolute;left:622.50px;top:641.68px;font-size:24px;line-height:24px;color:#9198a1;font-weight:400;letter-spacing:0.026px;white-space:nowrap;-webkit-text-stroke:0.45px #0d1117;">Automatic bridge from NPE RUNN treadmill</div>
<div id="tebf4fe59" style="position:absolute;left:622.50px;top:678.18px;font-size:24px;line-height:24px;color:#9198a1;font-weight:400;letter-spacing:0.089px;white-space:nowrap;-webkit-text-stroke:0.45px #0d1117;">telemetry to Google Health Connect with</div>
<div id="t5a50b088" style="position:absolute;left:621.50px;top:714.18px;font-size:24px;line-height:24px;color:#9198a1;font-weight:400;letter-spacing:0.122px;white-space:nowrap;-webkit-text-stroke:0.45px #0d1117;">background workout sync.</div>
<div style="position:absolute;left:622px;top:781px;width:24px;height:24px;background:#a97bff;border-radius:50%"></div>
<div id="tda84c76d" style="position:absolute;left:651.00px;top:782.68px;font-size:24px;line-height:24px;color:#9198a1;font-weight:400;letter-spacing:0.520px;white-space:nowrap;-webkit-text-stroke:0.45px #0d1117;">Kotlin</div>
<svg style="position:absolute;left:752px;top:777px;" width="32" height="32" viewBox="0 0 16 16" fill="#9198a1"><path d="M8 .25a.75.75 0 0 1 .673.418l1.882 3.815 4.21.612a.75.75 0 0 1 .416 1.279l-3.046 2.97.719 4.192a.751.751 0 0 1-1.088.791L8 12.347l-3.766 1.98a.75.75 0 0 1-1.088-.79l.72-4.194L.818 6.374a.75.75 0 0 1 .416-1.28l4.21-.611L7.327.668A.75.75 0 0 1 8 .25Zm0 2.445L6.615 5.5a.75.75 0 0 1-.564.41l-3.097.45 2.24 2.184a.75.75 0 0 1 .216.664l-.528 3.084 2.769-1.456a.75.75 0 0 1 .698 0l2.77 1.456-.53-3.084a.75.75 0 0 1 .216-.664l2.24-2.183-3.096-.45a.75.75 0 0 1-.564-.41L8 2.694Z"/></svg>
<div id="tb9d67dfb" style="position:absolute;left:791.00px;top:782.68px;font-size:24px;line-height:24px;color:#9198a1;font-weight:400;letter-spacing:0.000px;white-space:nowrap;-webkit-text-stroke:0.45px #0d1117;">1</div>
<div class="btn" style="left:1227px;top:540px;width:607px;height:305px;border-radius:11px"></div>
<div id="t95f29a5f" style="position:absolute;left:1260.50px;top:582.50px;font-size:28px;line-height:28px;color:#4493f8;font-weight:700;letter-spacing:-0.571px;white-space:nowrap;-webkit-text-stroke:0.45px #0d1117;">crierbot</div>
<div style="position:absolute;left:1690px;top:580px;width:94px;height:39px;box-sizing:border-box;border:2px solid #3d444d;border-radius:20px"></div>
<div id="te4b50bf3" style="position:absolute;left:1703.00px;top:588.68px;font-size:24px;line-height:24px;color:#9198a1;font-weight:700;letter-spacing:-0.840px;white-space:nowrap;-webkit-text-stroke:0.45px #0d1117;">Public</div>
<div id="tcf1ef3b7" style="position:absolute;left:1259.50px;top:626.48px;font-size:24px;line-height:24px;color:#9198a1;font-weight:400;letter-spacing:0.214px;white-space:nowrap;-webkit-text-stroke:0.45px #0d1117;">Forked from hellsman/crierbot</div>
<div style="position:absolute;left:1398px;top:652px;width:186px;height:2px;background:#9198a1"></div>
<div id="t7c44c924" style="position:absolute;left:1259.50px;top:694.58px;font-size:24px;line-height:24px;color:#9198a1;font-weight:400;letter-spacing:0.069px;white-space:nowrap;-webkit-text-stroke:0.45px #0d1117;">Бот оповещения с помощью Telegram</div>
<div style="position:absolute;left:1261px;top:781px;width:24px;height:24px;background:#3572a5;border-radius:50%"></div>
<div id="t4723928c" style="position:absolute;left:1290.50px;top:782.68px;font-size:24px;line-height:24px;color:#9198a1;font-weight:400;letter-spacing:0.280px;white-space:nowrap;-webkit-text-stroke:0.45px #0d1117;">Python</div>
<div class="btn" style="left:588px;top:877px;width:607px;height:237px;border-radius:11px"></div>
<div id="tdb84f27f" style="position:absolute;left:621.50px;top:920.30px;font-size:28px;line-height:28px;color:#4493f8;font-weight:700;letter-spacing:-0.340px;white-space:nowrap;-webkit-text-stroke:0.45px #0d1117;">docker-automated-build.builder-</div>
<div id="t51aa43da" style="position:absolute;left:621.50px;top:962.30px;font-size:28px;line-height:28px;color:#4493f8;font-weight:700;letter-spacing:-0.385px;white-space:nowrap;-webkit-text-stroke:0.45px #0d1117;">debian-jessie-openjdk-7-jdk</div>
<div style="position:absolute;left:1051px;top:917px;width:94px;height:39px;box-sizing:border-box;border:2px solid #3d444d;border-radius:20px"></div>
<div id="t25654e46" style="position:absolute;left:1064.00px;top:925.68px;font-size:24px;line-height:24px;color:#9198a1;font-weight:700;letter-spacing:-0.840px;white-space:nowrap;-webkit-text-stroke:0.45px #0d1117;">Public</div>
<div style="position:absolute;left:622px;top:1051px;width:24px;height:24px;background:#89e051;border-radius:50%"></div>
<div id="tea807e8e" style="position:absolute;left:651.00px;top:1052.18px;font-size:24px;line-height:24px;color:#9198a1;font-weight:400;letter-spacing:0.100px;white-space:nowrap;-webkit-text-stroke:0.45px #0d1117;">Shell</div>
<div class="btn" style="left:1227px;top:877px;width:607px;height:237px;border-radius:11px"></div>
<div id="tf9c95e2d" style="position:absolute;left:1260.50px;top:920.30px;font-size:28px;line-height:28px;color:#4493f8;font-weight:700;letter-spacing:-0.340px;white-space:nowrap;-webkit-text-stroke:0.45px #0d1117;">docker-automated-build.builder-</div>
<div id="tdc2b1ede" style="position:absolute;left:1259.50px;top:962.30px;font-size:28px;line-height:28px;color:#4493f8;font-weight:700;letter-spacing:-0.271px;white-space:nowrap;-webkit-text-stroke:0.45px #0d1117;">ubuntu-android-sdk</div>
<div style="position:absolute;left:1690px;top:917px;width:94px;height:39px;box-sizing:border-box;border:2px solid #3d444d;border-radius:20px"></div>
<div id="t101baf10" style="position:absolute;left:1703.00px;top:925.68px;font-size:24px;line-height:24px;color:#9198a1;font-weight:700;letter-spacing:-0.840px;white-space:nowrap;-webkit-text-stroke:0.45px #0d1117;">Public</div>
<div style="position:absolute;left:1261px;top:1051px;width:24px;height:24px;background:#384d54;border-radius:50%"></div>
<div id="t9c14dca0" style="position:absolute;left:1290.50px;top:1052.18px;font-size:24px;line-height:24px;color:#9198a1;font-weight:400;letter-spacing:0.267px;white-space:nowrap;-webkit-text-stroke:0.45px #0d1117;">Dockerfile</div>
<div class="btn" style="left:588px;top:1146px;width:607px;height:236px;border-radius:11px"></div>
<div id="t83302ace" style="position:absolute;left:621.50px;top:1189.00px;font-size:28px;line-height:28px;color:#4493f8;font-weight:700;letter-spacing:-0.340px;white-space:nowrap;-webkit-text-stroke:0.45px #0d1117;">docker-automated-build.builder-</div>
<div id="t5ca334b3" style="position:absolute;left:622.50px;top:1231.00px;font-size:28px;line-height:28px;color:#4493f8;font-weight:700;letter-spacing:-0.958px;white-space:nowrap;-webkit-text-stroke:0.45px #0d1117;">centos1611-make-maven-gcc</div>
<div style="position:absolute;left:1051px;top:1186px;width:94px;height:39px;box-sizing:border-box;border:2px solid #3d444d;border-radius:20px"></div>
<div id="t82f6445b" style="position:absolute;left:1064.00px;top:1194.68px;font-size:24px;line-height:24px;color:#9198a1;font-weight:700;letter-spacing:-0.840px;white-space:nowrap;-webkit-text-stroke:0.45px #0d1117;">Public</div>
<div style="position:absolute;left:622px;top:1319px;width:24px;height:24px;background:#89e051;border-radius:50%"></div>
<div id="tc75cea74" style="position:absolute;left:651.00px;top:1320.18px;font-size:24px;line-height:24px;color:#9198a1;font-weight:400;letter-spacing:0.100px;white-space:nowrap;-webkit-text-stroke:0.45px #0d1117;">Shell</div>
<div class="btn" style="left:1227px;top:1146px;width:607px;height:236px;border-radius:11px"></div>
<div id="t699ac5b5" style="position:absolute;left:1261.50px;top:1189.00px;font-size:28px;line-height:28px;color:#4493f8;font-weight:700;letter-spacing:-0.500px;white-space:nowrap;-webkit-text-stroke:0.45px #0d1117;">test2</div>
<div style="position:absolute;left:1690px;top:1186px;width:94px;height:39px;box-sizing:border-box;border:2px solid #3d444d;border-radius:20px"></div>
<div id="t37e79653" style="position:absolute;left:1703.00px;top:1194.68px;font-size:24px;line-height:24px;color:#9198a1;font-weight:700;letter-spacing:-0.840px;white-space:nowrap;-webkit-text-stroke:0.45px #0d1117;">Public</div>
<div id="t665e294c" style="position:absolute;left:587.00px;top:1471.71px;font-size:32px;line-height:32px;color:#f0f6fc;font-weight:400;letter-spacing:0.097px;white-space:nowrap;-webkit-text-stroke:0.45px #0d1117;">105 contributions in the last year</div>
<div id="t22ec02e3" style="position:absolute;left:1569.00px;top:1481.98px;font-size:24px;line-height:24px;color:#9198a1;font-weight:400;letter-spacing:0.340px;white-space:nowrap;-webkit-text-stroke:0.45px #0d1117;">Contribution settings</div>
<svg style="position:absolute;left:1802px;top:1477px;" width="32" height="32" viewBox="0 0 16 16" fill="#9198a1"><path d="m4.427 7.427 3.396 3.396a.25.25 0 0 0 .354 0l3.396-3.396A.25.25 0 0 0 11.396 7H4.604a.25.25 0 0 0-.177.427Z"/></svg>
<div style="position:absolute;left:588px;top:1526px;width:1246px;height:400px;box-sizing:border-box;border-radius:12px;border:2px solid #3d444d"></div>
<div id="t2a1c13d9" style="position:absolute;left:673.00px;top:1565.68px;font-size:24px;line-height:24px;color:#f0f6fc;font-weight:400;letter-spacing:0.000px;white-space:nowrap;-webkit-text-stroke:0.45px #0d1117;">Mar</div>
<div id="t3d2857eb" style="position:absolute;left:726.00px;top:1565.68px;font-size:24px;line-height:24px;color:#f0f6fc;font-weight:400;letter-spacing:0.000px;white-space:nowrap;-webkit-text-stroke:0.45px #0d1117;">Apr</div>
<div id="t6cf19d9a" style="position:absolute;left:829.00px;top:1565.68px;font-size:24px;line-height:24px;color:#f0f6fc;font-weight:400;letter-spacing:0.000px;white-space:nowrap;-webkit-text-stroke:0.45px #0d1117;">May</div>
<div id="t7da5b32b" style="position:absolute;left:933.50px;top:1565.68px;font-size:24px;line-height:24px;color:#f0f6fc;font-weight:400;letter-spacing:0.000px;white-space:nowrap;-webkit-text-stroke:0.45px #0d1117;">Jun</div>
<div id="t0fb800a0" style="position:absolute;left:1063.00px;top:1565.68px;font-size:24px;line-height:24px;color:#f0f6fc;font-weight:400;letter-spacing:0.000px;white-space:nowrap;-webkit-text-stroke:0.45px #0d1117;">Jul</div>
<div id="t71234690" style="position:absolute;left:1168.00px;top:1565.68px;font-size:24px;line-height:24px;color:#f0f6fc;font-weight:400;letter-spacing:0.000px;white-space:nowrap;-webkit-text-stroke:0.45px #0d1117;">Aug</div>
<div id="t871a26a2" style="position:absolute;left:1296.50px;top:1565.68px;font-size:24px;line-height:24px;color:#f0f6fc;font-weight:400;letter-spacing:0.000px;white-space:nowrap;-webkit-text-stroke:0.45px #0d1117;">Sep</div>
<div id="t6d3f60d1" style="position:absolute;left:1401.00px;top:1565.68px;font-size:24px;line-height:24px;color:#f0f6fc;font-weight:400;letter-spacing:0.000px;white-space:nowrap;-webkit-text-stroke:0.45px #0d1117;">Oct</div>
<div id="tbe39f925" style="position:absolute;left:1504.00px;top:1565.68px;font-size:24px;line-height:24px;color:#f0f6fc;font-weight:400;letter-spacing:0.000px;white-space:nowrap;-webkit-text-stroke:0.45px #0d1117;">Nov</div>
<div id="tdbd812d7" style="position:absolute;left:1634.00px;top:1565.68px;font-size:24px;line-height:24px;color:#f0f6fc;font-weight:400;letter-spacing:0.000px;white-space:nowrap;-webkit-text-stroke:0.45px #0d1117;">Dec</div>
<div id="tdee68bd6" style="position:absolute;left:1738.00px;top:1565.68px;font-size:24px;line-height:24px;color:#f0f6fc;font-weight:400;letter-spacing:0.000px;white-space:nowrap;-webkit-text-stroke:0.45px #0d1117;">Jan</div>
<div id="t76cdfeb7" style="position:absolute;left:610.00px;top:1619.68px;font-size:24px;line-height:24px;color:#f0f6fc;font-weight:400;letter-spacing:0.000px;white-space:nowrap;-webkit-text-stroke:0.45px #0d1117;">Mon</div>
<div id="t100bd0e7" style="position:absolute;left:612.00px;top:1671.38px;font-size:24px;line-height:24px;color:#f0f6fc;font-weight:400;letter-spacing:0.000px;white-space:nowrap;-webkit-text-stroke:0.45px #0d1117;">Wed</div>
<div id="t85363fbd" style="position:absolute;left:610.00px;top:1723.68px;font-size:24px;line-height:24px;color:#f0f6fc;font-weight:400;letter-spacing:0.000px;white-space:nowrap;-webkit-text-stroke:0.45px #0d1117;">Fri</div>
<svg style="position:absolute;left:0;top:0" width="1864" height="1854" viewBox="0 0 1864 1854"><rect x="674" y="1596" width="20" height="20" rx="4" fill="#151b23"/><rect x="674" y="1622" width="20" height="20" rx="4" fill="#151b23"/><rect x="674" y="1648" width="20" height="20" rx="4" fill="#151b23"/><rect x="674" y="1674" width="20" height="20" rx="4" fill="#151b23"/><rect x="674" y="1700" width="20" height="20" rx="4" fill="#151b23"/><rect x="674" y="1726" width="20" height="20" rx="4" fill="#151b23"/><rect x="674" y="1752" width="20" height="20" rx="4" fill="#151b23"/><rect x="700" y="1596" width="20" height="20" rx="4" fill="#151b23"/><rect x="700" y="1622" width="20" height="20" rx="4" fill="#151b23"/><rect x="700" y="1648" width="20" height="20" rx="4" fill="#151b23"/><rect x="700" y="1674" width="20" height="20" rx="4" fill="#151b23"/><rect x="700" y="1700" width="20" height="20" rx="4" fill="#151b23"/><rect x="700" y="1726" width="20" height="20" rx="4" fill="#151b23"/><rect x="700" y="1752" width="20" height="20" rx="4" fill="#151b23"/><rect x="726" y="1596" width="20" height="20" rx="4" fill="#151b23"/><rect x="726" y="1622" width="20" height="20" rx="4" fill="#151b23"/><rect x="726" y="1648" width="20" height="20" rx="4" fill="#151b23"/><rect x="726" y="1674" width="20" height="20" rx="4" fill="#151b23"/><rect x="726" y="1700" width="20" height="20" rx="4" fill="#151b23"/><rect x="726" y="1726" width="20" height="20" rx="4" fill="#151b23"/><rect x="726" y="1752" width="20" height="20" rx="4" fill="#151b23"/><rect x="752" y="1596" width="20" height="20" rx="4" fill="#151b23"/><rect x="752" y="1622" width="20" height="20" rx="4" fill="#151b23"/><rect x="752" y="1648" width="20" height="20" rx="4" fill="#151b23"/><rect x="752" y="1674" width="20" height="20" rx="4" fill="#151b23"/><rect x="752" y="1700" width="20" height="20" rx="4" fill="#151b23"/><rect x="752" y="1726" width="20" height="20" rx="4" fill="#151b23"/><rect x="752" y="1752" width="20" height="20" rx="4" fill="#151b23"/><rect x="778" y="1596" width="20" height="20" rx="4" fill="#151b23"/><rect x="778" y="1622" width="20" height="20" rx="4" fill="#151b23"/><rect x="778" y="1648" width="20" height="20" rx="4" fill="#151b23"/><rect x="778" y="1674" width="20" height="20" rx="4" fill="#151b23"/><rect x="778" y="1700" width="20" height="20" rx="4" fill="#151b23"/><rect x="778" y="1726" width="20" height="20" rx="4" fill="#151b23"/><rect x="778" y="1752" width="20" height="20" rx="4" fill="#151b23"/><rect x="804" y="1596" width="20" height="20" rx="4" fill="#151b23"/><rect x="804" y="1622" width="20" height="20" rx="4" fill="#151b23"/><rect x="804" y="1648" width="20" height="20" rx="4" fill="#151b23"/><rect x="804" y="1674" width="20" height="20" rx="4" fill="#151b23"/><rect x="804" y="1700" width="20" height="20" rx="4" fill="#151b23"/><rect x="804" y="1726" width="20" height="20" rx="4" fill="#151b23"/><rect x="804" y="1752" width="20" height="20" rx="4" fill="#151b23"/><rect x="830" y="1596" width="20" height="20" rx="4" fill="#151b23"/><rect x="830" y="1622" width="20" height="20" rx="4" fill="#033a16"/><rect x="830" y="1648" width="20" height="20" rx="4" fill="#151b23"/><rect x="830" y="1674" width="20" height="20" rx="4" fill="#151b23"/><rect x="830" y="1700" width="20" height="20" rx="4" fill="#151b23"/><rect x="830" y="1726" width="20" height="20" rx="4" fill="#151b23"/><rect x="830" y="1752" width="20" height="20" rx="4" fill="#151b23"/><rect x="856" y="1596" width="20" height="20" rx="4" fill="#151b23"/><rect x="856" y="1622" width="20" height="20" rx="4" fill="#151b23"/><rect x="856" y="1648" width="20" height="20" rx="4" fill="#151b23"/><rect x="856" y="1674" width="20" height="20" rx="4" fill="#151b23"/><rect x="856" y="1700" width="20" height="20" rx="4" fill="#151b23"/><rect x="856" y="1726" width="20" height="20" rx="4" fill="#151b23"/><rect x="856" y="1752" width="20" height="20" rx="4" fill="#151b23"/><rect x="882" y="1596" width="20" height="20" rx="4" fill="#151b23"/><rect x="882" y="1622" width="20" height="20" rx="4" fill="#151b23"/><rect x="882" y="1648" width="20" height="20" rx="4" fill="#151b23"/><rect x="882" y="1674" width="20" height="20" rx="4" fill="#151b23"/><rect x="882" y="1700" width="20" height="20" rx="4" fill="#151b23"/><rect x="882" y="1726" width="20" height="20" rx="4" fill="#151b23"/><rect x="882" y="1752" width="20" height="20" rx="4" fill="#151b23"/><rect x="908" y="1596" width="20" height="20" rx="4" fill="#151b23"/><rect x="908" y="1622" width="20" height="20" rx="4" fill="#151b23"/><rect x="908" y="1648" width="20" height="20" rx="4" fill="#151b23"/><rect x="908" y="1674" width="20" height="20" rx="4" fill="#151b23"/><rect x="908" y="1700" width="20" height="20" rx="4" fill="#151b23"/><rect x="908" y="1726" width="20" height="20" rx="4" fill="#151b23"/><rect x="908" y="1752" width="20" height="20" rx="4" fill="#151b23"/><rect x="934" y="1596" width="20" height="20" rx="4" fill="#151b23"/><rect x="934" y="1622" width="20" height="20" rx="4" fill="#151b23"/><rect x="934" y="1648" width="20" height="20" rx="4" fill="#151b23"/><rect x="934" y="1674" width="20" height="20" rx="4" fill="#151b23"/><rect x="934" y="1700" width="20" height="20" rx="4" fill="#151b23"/><rect x="934" y="1726" width="20" height="20" rx="4" fill="#151b23"/><rect x="934" y="1752" width="20" height="20" rx="4" fill="#151b23"/><rect x="960" y="1596" width="20" height="20" rx="4" fill="#151b23"/><rect x="960" y="1622" width="20" height="20" rx="4" fill="#151b23"/><rect x="960" y="1648" width="20" height="20" rx="4" fill="#151b23"/><rect x="960" y="1674" width="20" height="20" rx="4" fill="#151b23"/><rect x="960" y="1700" width="20" height="20" rx="4" fill="#151b23"/><rect x="960" y="1726" width="20" height="20" rx="4" fill="#151b23"/><rect x="960" y="1752" width="20" height="20" rx="4" fill="#151b23"/><rect x="986" y="1596" width="20" height="20" rx="4" fill="#151b23"/><rect x="986" y="1622" width="20" height="20" rx="4" fill="#151b23"/><rect x="986" y="1648" width="20" height="20" rx="4" fill="#151b23"/><rect x="986" y="1674" width="20" height="20" rx="4" fill="#151b23"/><rect x="986" y="1700" width="20" height="20" rx="4" fill="#151b23"/><rect x="986" y="1726" width="20" height="20" rx="4" fill="#151b23"/><rect x="986" y="1752" width="20" height="20" rx="4" fill="#151b23"/><rect x="1012" y="1596" width="20" height="20" rx="4" fill="#151b23"/><rect x="1012" y="1622" width="20" height="20" rx="4" fill="#151b23"/><rect x="1012" y="1648" width="20" height="20" rx="4" fill="#151b23"/><rect x="1012" y="1674" width="20" height="20" rx="4" fill="#151b23"/><rect x="1012" y="1700" width="20" height="20" rx="4" fill="#151b23"/><rect x="1012" y="1726" width="20" height="20" rx="4" fill="#151b23"/><rect x="1012" y="1752" width="20" height="20" rx="4" fill="#151b23"/><rect x="1038" y="1596" width="20" height="20" rx="4" fill="#151b23"/><rect x="1038" y="1622" width="20" height="20" rx="4" fill="#151b23"/><rect x="1038" y="1648" width="20" height="20" rx="4" fill="#151b23"/><rect x="1038" y="1674" width="20" height="20" rx="4" fill="#151b23"/><rect x="1038" y="1700" width="20" height="20" rx="4" fill="#151b23"/><rect x="1038" y="1726" width="20" height="20" rx="4" fill="#151b23"/><rect x="1038" y="1752" width="20" height="20" rx="4" fill="#151b23"/><rect x="1064" y="1596" width="20" height="20" rx="4" fill="#151b23"/><rect x="1064" y="1622" width="20" height="20" rx="4" fill="#151b23"/><rect x="1064" y="1648" width="20" height="20" rx="4" fill="#151b23"/><rect x="1064" y="1674" width="20" height="20" rx="4" fill="#151b23"/><rect x="1064" y="1700" width="20" height="20" rx="4" fill="#151b23"/><rect x="1064" y="1726" width="20" height="20" rx="4" fill="#151b23"/><rect x="1064" y="1752" width="20" height="20" rx="4" fill="#151b23"/><rect x="1090" y="1596" width="20" height="20" rx="4" fill="#151b23"/><rect x="1090" y="1622" width="20" height="20" rx="4" fill="#151b23"/><rect x="1090" y="1648" width="20" height="20" rx="4" fill="#151b23"/><rect x="1090" y="1674" width="20" height="20" rx="4" fill="#151b23"/><rect x="1090" y="1700" width="20" height="20" rx="4" fill="#151b23"/><rect x="1090" y="1726" width="20" height="20" rx="4" fill="#151b23"/><rect x="1090" y="1752" width="20" height="20" rx="4" fill="#151b23"/><rect x="1116" y="1596" width="20" height="20" rx="4" fill="#151b23"/><rect x="1116" y="1622" width="20" height="20" rx="4" fill="#151b23"/><rect x="1116" y="1648" width="20" height="20" rx="4" fill="#151b23"/><rect x="1116" y="1674" width="20" height="20" rx="4" fill="#151b23"/><rect x="1116" y="1700" width="20" height="20" rx="4" fill="#151b23"/><rect x="1116" y="1726" width="20" height="20" rx="4" fill="#151b23"/><rect x="1116" y="1752" width="20" height="20" rx="4" fill="#151b23"/><rect x="1142" y="1596" width="20" height="20" rx="4" fill="#151b23"/><rect x="1142" y="1622" width="20" height="20" rx="4" fill="#151b23"/><rect x="1142" y="1648" width="20" height="20" rx="4" fill="#151b23"/><rect x="1142" y="1674" width="20" height="20" rx="4" fill="#151b23"/><rect x="1142" y="1700" width="20" height="20" rx="4" fill="#151b23"/><rect x="1142" y="1726" width="20" height="20" rx="4" fill="#151b23"/><rect x="1142" y="1752" width="20" height="20" rx="4" fill="#151b23"/><rect x="1168" y="1596" width="20" height="20" rx="4" fill="#151b23"/><rect x="1168" y="1622" width="20" height="20" rx="4" fill="#151b23"/><rect x="1168" y="1648" width="20" height="20" rx="4" fill="#151b23"/><rect x="1168" y="1674" width="20" height="20" rx="4" fill="#151b23"/><rect x="1168" y="1700" width="20" height="20" rx="4" fill="#151b23"/><rect x="1168" y="1726" width="20" height="20" rx="4" fill="#151b23"/><rect x="1168" y="1752" width="20" height="20" rx="4" fill="#151b23"/><rect x="1194" y="1596" width="20" height="20" rx="4" fill="#151b23"/><rect x="1194" y="1622" width="20" height="20" rx="4" fill="#151b23"/><rect x="1194" y="1648" width="20" height="20" rx="4" fill="#151b23"/><rect x="1194" y="1674" width="20" height="20" rx="4" fill="#151b23"/><rect x="1194" y="1700" width="20" height="20" rx="4" fill="#033a16"/><rect x="1194" y="1726" width="20" height="20" rx="4" fill="#151b23"/><rect x="1194" y="1752" width="20" height="20" rx="4" fill="#151b23"/><rect x="1220" y="1596" width="20" height="20" rx="4" fill="#151b23"/><rect x="1220" y="1622" width="20" height="20" rx="4" fill="#151b23"/><rect x="1220" y="1648" width="20" height="20" rx="4" fill="#151b23"/><rect x="1220" y="1674" width="20" height="20" rx="4" fill="#151b23"/><rect x="1220" y="1700" width="20" height="20" rx="4" fill="#151b23"/><rect x="1220" y="1726" width="20" height="20" rx="4" fill="#151b23"/><rect x="1220" y="1752" width="20" height="20" rx="4" fill="#151b23"/><rect x="1246" y="1596" width="20" height="20" rx="4" fill="#151b23"/><rect x="1246" y="1622" width="20" height="20" rx="4" fill="#151b23"/><rect x="1246" y="1648" width="20" height="20" rx="4" fill="#151b23"/><rect x="1246" y="1674" width="20" height="20" rx="4" fill="#151b23"/><rect x="1246" y="1700" width="20" height="20" rx="4" fill="#151b23"/><rect x="1246" y="1726" width="20" height="20" rx="4" fill="#033a16"/><rect x="1246" y="1752" width="20" height="20" rx="4" fill="#151b23"/><rect x="1272" y="1596" width="20" height="20" rx="4" fill="#151b23"/><rect x="1272" y="1622" width="20" height="20" rx="4" fill="#151b23"/><rect x="1272" y="1648" width="20" height="20" rx="4" fill="#151b23"/><rect x="1272" y="1674" width="20" height="20" rx="4" fill="#151b23"/><rect x="1272" y="1700" width="20" height="20" rx="4" fill="#151b23"/><rect x="1272" y="1726" width="20" height="20" rx="4" fill="#151b23"/><rect x="1272" y="1752" width="20" height="20" rx="4" fill="#151b23"/><rect x="1298" y="1596" width="20" height="20" rx="4" fill="#151b23"/><rect x="1298" y="1622" width="20" height="20" rx="4" fill="#151b23"/><rect x="1298" y="1648" width="20" height="20" rx="4" fill="#151b23"/><rect x="1298" y="1674" width="20" height="20" rx="4" fill="#151b23"/><rect x="1298" y="1700" width="20" height="20" rx="4" fill="#033a16"/><rect x="1298" y="1726" width="20" height="20" rx="4" fill="#151b23"/><rect x="1298" y="1752" width="20" height="20" rx="4" fill="#151b23"/><rect x="1324" y="1596" width="20" height="20" rx="4" fill="#151b23"/><rect x="1324" y="1622" width="20" height="20" rx="4" fill="#151b23"/><rect x="1324" y="1648" width="20" height="20" rx="4" fill="#151b23"/><rect x="1324" y="1674" width="20" height="20" rx="4" fill="#151b23"/><rect x="1324" y="1700" width="20" height="20" rx="4" fill="#151b23"/><rect x="1324" y="1726" width="20" height="20" rx="4" fill="#151b23"/><rect x="1324" y="1752" width="20" height="20" rx="4" fill="#151b23"/><rect x="1350" y="1596" width="20" height="20" rx="4" fill="#151b23"/><rect x="1350" y="1622" width="20" height="20" rx="4" fill="#151b23"/><rect x="1350" y="1648" width="20" height="20" rx="4" fill="#151b23"/><rect x="1350" y="1674" width="20" height="20" rx="4" fill="#033a16"/><rect x="1350" y="1700" width="20" height="20" rx="4" fill="#151b23"/><rect x="1350" y="1726" width="20" height="20" rx="4" fill="#151b23"/><rect x="1350" y="1752" width="20" height="20" rx="4" fill="#151b23"/><rect x="1376" y="1596" width="20" height="20" rx="4" fill="#151b23"/><rect x="1376" y="1622" width="20" height="20" rx="4" fill="#151b23"/><rect x="1376" y="1648" width="20" height="20" rx="4" fill="#151b23"/><rect x="1376" y="1674" width="20" height="20" rx="4" fill="#151b23"/><rect x="1376" y="1700" width="20" height="20" rx="4" fill="#151b23"/><rect x="1376" y="1726" width="20" height="20" rx="4" fill="#151b23"/><rect x="1376" y="1752" width="20" height="20" rx="4" fill="#151b23"/><rect x="1402" y="1596" width="20" height="20" rx="4" fill="#151b23"/><rect x="1402" y="1622" width="20" height="20" rx="4" fill="#151b23"/><rect x="1402" y="1648" width="20" height="20" rx="4" fill="#151b23"/><rect x="1402" y="1674" width="20" height="20" rx="4" fill="#151b23"/><rect x="1402" y="1700" width="20" height="20" rx="4" fill="#151b23"/><rect x="1402" y="1726" width="20" height="20" rx="4" fill="#151b23"/><rect x="1402" y="1752" width="20" height="20" rx="4" fill="#151b23"/><rect x="1428" y="1596" width="20" height="20" rx="4" fill="#151b23"/><rect x="1428" y="1622" width="20" height="20" rx="4" fill="#151b23"/><rect x="1428" y="1648" width="20" height="20" rx="4" fill="#151b23"/><rect x="1428" y="1674" width="20" height="20" rx="4" fill="#033a16"/><rect x="1428" y="1700" width="20" height="20" rx="4" fill="#151b23"/><rect x="1428" y="1726" width="20" height="20" rx="4" fill="#151b23"/><rect x="1428" y="1752" width="20" height="20" rx="4" fill="#151b23"/><rect x="1454" y="1596" width="20" height="20" rx="4" fill="#151b23"/><rect x="1454" y="1622" width="20" height="20" rx="4" fill="#151b23"/><rect x="1454" y="1648" width="20" height="20" rx="4" fill="#151b23"/><rect x="1454" y="1674" width="20" height="20" rx="4" fill="#151b23"/><rect x="1454" y="1700" width="20" height="20" rx="4" fill="#151b23"/><rect x="1454" y="1726" width="20" height="20" rx="4" fill="#151b23"/><rect x="1454" y="1752" width="20" height="20" rx="4" fill="#151b23"/><rect x="1480" y="1596" width="20" height="20" rx="4" fill="#151b23"/><rect x="1480" y="1622" width="20" height="20" rx="4" fill="#151b23"/><rect x="1480" y="1648" width="20" height="20" rx="4" fill="#151b23"/><rect x="1480" y="1674" width="20" height="20" rx="4" fill="#151b23"/><rect x="1480" y="1700" width="20" height="20" rx="4" fill="#151b23"/><rect x="1480" y="1726" width="20" height="20" rx="4" fill="#151b23"/><rect x="1480" y="1752" width="20" height="20" rx="4" fill="#151b23"/><rect x="1506" y="1596" width="20" height="20" rx="4" fill="#151b23"/><rect x="1506" y="1622" width="20" height="20" rx="4" fill="#151b23"/><rect x="1506" y="1648" width="20" height="20" rx="4" fill="#151b23"/><rect x="1506" y="1674" width="20" height="20" rx="4" fill="#151b23"/><rect x="1506" y="1700" width="20" height="20" rx="4" fill="#151b23"/><rect x="1506" y="1726" width="20" height="20" rx="4" fill="#151b23"/><rect x="1506" y="1752" width="20" height="20" rx="4" fill="#151b23"/><rect x="1532" y="1596" width="20" height="20" rx="4" fill="#151b23"/><rect x="1532" y="1622" width="20" height="20" rx="4" fill="#151b23"/><rect x="1532" y="1648" width="20" height="20" rx="4" fill="#151b23"/><rect x="1532" y="1674" width="20" height="20" rx="4" fill="#033a16"/><rect x="1532" y="1700" width="20" height="20" rx="4" fill="#151b23"/><rect x="1532" y="1726" width="20" height="20" rx="4" fill="#151b23"/><rect x="1532" y="1752" width="20" height="20" rx="4" fill="#151b23"/><rect x="1558" y="1596" width="20" height="20" rx="4" fill="#151b23"/><rect x="1558" y="1622" width="20" height="20" rx="4" fill="#151b23"/><rect x="1558" y="1648" width="20" height="20" rx="4" fill="#151b23"/><rect x="1558" y="1674" width="20" height="20" rx="4" fill="#151b23"/><rect x="1558" y="1700" width="20" height="20" rx="4" fill="#151b23"/><rect x="1558" y="1726" width="20" height="20" rx="4" fill="#151b23"/><rect x="1558" y="1752" width="20" height="20" rx="4" fill="#56d364"/><rect x="1584" y="1596" width="20" height="20" rx="4" fill="#033a16"/><rect x="1584" y="1622" width="20" height="20" rx="4" fill="#033a16"/><rect x="1584" y="1648" width="20" height="20" rx="4" fill="#196c2e"/><rect x="1584" y="1674" width="20" height="20" rx="4" fill="#151b23"/><rect x="1584" y="1700" width="20" height="20" rx="4" fill="#151b23"/><rect x="1584" y="1726" width="20" height="20" rx="4" fill="#151b23"/><rect x="1584" y="1752" width="20" height="20" rx="4" fill="#151b23"/><rect x="1610" y="1596" width="20" height="20" rx="4" fill="#151b23"/><rect x="1610" y="1622" width="20" height="20" rx="4" fill="#151b23"/><rect x="1610" y="1648" width="20" height="20" rx="4" fill="#151b23"/><rect x="1610" y="1674" width="20" height="20" rx="4" fill="#151b23"/><rect x="1610" y="1700" width="20" height="20" rx="4" fill="#151b23"/><rect x="1610" y="1726" width="20" height="20" rx="4" fill="#151b23"/><rect x="1610" y="1752" width="20" height="20" rx="4" fill="#151b23"/><rect x="1636" y="1596" width="20" height="20" rx="4" fill="#151b23"/><rect x="1636" y="1622" width="20" height="20" rx="4" fill="#151b23"/><rect x="1636" y="1648" width="20" height="20" rx="4" fill="#151b23"/><rect x="1636" y="1674" width="20" height="20" rx="4" fill="#151b23"/><rect x="1636" y="1700" width="20" height="20" rx="4" fill="#151b23"/><rect x="1636" y="1726" width="20" height="20" rx="4" fill="#151b23"/><rect x="1636" y="1752" width="20" height="20" rx="4" fill="#151b23"/><rect x="1662" y="1596" width="20" height="20" rx="4" fill="#151b23"/><rect x="1662" y="1622" width="20" height="20" rx="4" fill="#151b23"/><rect x="1662" y="1648" width="20" height="20" rx="4" fill="#151b23"/><rect x="1662" y="1674" width="20" height="20" rx="4" fill="#151b23"/><rect x="1662" y="1700" width="20" height="20" rx="4" fill="#151b23"/><rect x="1662" y="1726" width="20" height="20" rx="4" fill="#151b23"/><rect x="1662" y="1752" width="20" height="20" rx="4" fill="#151b23"/><rect x="1688" y="1596" width="20" height="20" rx="4" fill="#151b23"/><rect x="1688" y="1622" width="20" height="20" rx="4" fill="#151b23"/><rect x="1688" y="1648" width="20" height="20" rx="4" fill="#151b23"/><rect x="1688" y="1674" width="20" height="20" rx="4" fill="#151b23"/><rect x="1688" y="1700" width="20" height="20" rx="4" fill="#151b23"/><rect x="1688" y="1726" width="20" height="20" rx="4" fill="#151b23"/><rect x="1688" y="1752" width="20" height="20" rx="4" fill="#151b23"/><rect x="1714" y="1596" width="20" height="20" rx="4" fill="#151b23"/><rect x="1714" y="1622" width="20" height="20" rx="4" fill="#151b23"/><rect x="1714" y="1648" width="20" height="20" rx="4" fill="#151b23"/><rect x="1714" y="1674" width="20" height="20" rx="4" fill="#151b23"/><rect x="1714" y="1700" width="20" height="20" rx="4" fill="#151b23"/><rect x="1714" y="1726" width="20" height="20" rx="4" fill="#151b23"/><rect x="1714" y="1752" width="20" height="20" rx="4" fill="#151b23"/><rect x="1740" y="1596" width="20" height="20" rx="4" fill="#151b23"/><rect x="1740" y="1622" width="20" height="20" rx="4" fill="#151b23"/><rect x="1740" y="1648" width="20" height="20" rx="4" fill="#151b23"/><rect x="1740" y="1674" width="20" height="20" rx="4" fill="#151b23"/><rect x="1740" y="1700" width="20" height="20" rx="4" fill="#151b23"/><rect x="1740" y="1726" width="20" height="20" rx="4" fill="#151b23"/><rect x="1740" y="1752" width="20" height="20" rx="4" fill="#151b23"/><rect x="1766" y="1596" width="20" height="20" rx="4" fill="#151b23"/><rect x="1766" y="1622" width="20" height="20" rx="4" fill="#151b23"/><rect x="1766" y="1648" width="20" height="20" rx="4" fill="#151b23"/><rect x="1766" y="1674" width="20" height="20" rx="4" fill="#151b23"/><rect x="1766" y="1700" width="20" height="20" rx="4" fill="#151b23"/><rect x="1766" y="1726" width="20" height="20" rx="4" fill="#151b23"/><rect x="1766" y="1752" width="20" height="20" rx="4" fill="#151b23"/><rect x="1792" y="1596" width="20" height="20" rx="4" fill="#151b23"/><rect x="1792" y="1622" width="20" height="20" rx="4" fill="#151b23"/><rect x="1792" y="1648" width="20" height="20" rx="4" fill="#151b23"/><rect x="1792" y="1674" width="20" height="20" rx="4" fill="#151b23"/><rect x="1792" y="1700" width="20" height="20" rx="4" fill="#151b23"/><rect x="1792" y="1726" width="20" height="20" rx="4" fill="#151b23"/><rect x="1792" y="1752" width="20" height="20" rx="4" fill="#151b23"/></svg>
<div style="position:absolute;left:606px;top:1778px;width:1210px;height:32px;background:#2e2e2e"></div>
<svg style="position:absolute;left:606px;top:1778px" width="1210" height="32"><path d="M9 15 L23 6 L23 24 Z" fill="#a3a3a3" stroke="#a3a3a3" stroke-width="2" stroke-linejoin="round"/><path d="M1201 15 L1187 6 L1187 24 Z" fill="#a3a3a3" stroke="#a3a3a3" stroke-width="2" stroke-linejoin="round"/><rect x="36" y="6" width="952" height="18" rx="9" fill="#a6a6a6"/></svg>
<div id="t2608f20f" style="position:absolute;left:669.50px;top:1823.18px;font-size:24px;line-height:24px;color:#9198a1;font-weight:400;letter-spacing:0.142px;white-space:nowrap;-webkit-text-stroke:0.45px #0d1117;">Learn how we count contributions</div>
<div id="tcb1ff72b" style="position:absolute;left:1502.50px;top:1822.68px;font-size:24px;line-height:24px;color:#9198a1;font-weight:400;letter-spacing:-1.733px;white-space:nowrap;-webkit-text-stroke:0.45px #0d1117;">Less</div>
<div style="position:absolute;left:1555px;top:1824px;width:20px;height:20px;background:#151b23;border-radius:4px"></div>
<div style="position:absolute;left:1583px;top:1824px;width:20px;height:20px;background:#033a16;border-radius:4px"></div>
<div style="position:absolute;left:1611px;top:1824px;width:20px;height:20px;background:#196c2e;border-radius:4px"></div>
<div style="position:absolute;left:1639px;top:1824px;width:20px;height:20px;background:#2ea043;border-radius:4px"></div>
<div style="position:absolute;left:1667px;top:1824px;width:20px;height:20px;background:#56d364;border-radius:4px"></div>
<div id="td31cb255" style="position:absolute;left:1694.50px;top:1822.68px;font-size:24px;line-height:24px;color:#9198a1;font-weight:400;letter-spacing:1.267px;white-space:nowrap;-webkit-text-stroke:0.45px #0d1117;">More</div>
</body></html>
